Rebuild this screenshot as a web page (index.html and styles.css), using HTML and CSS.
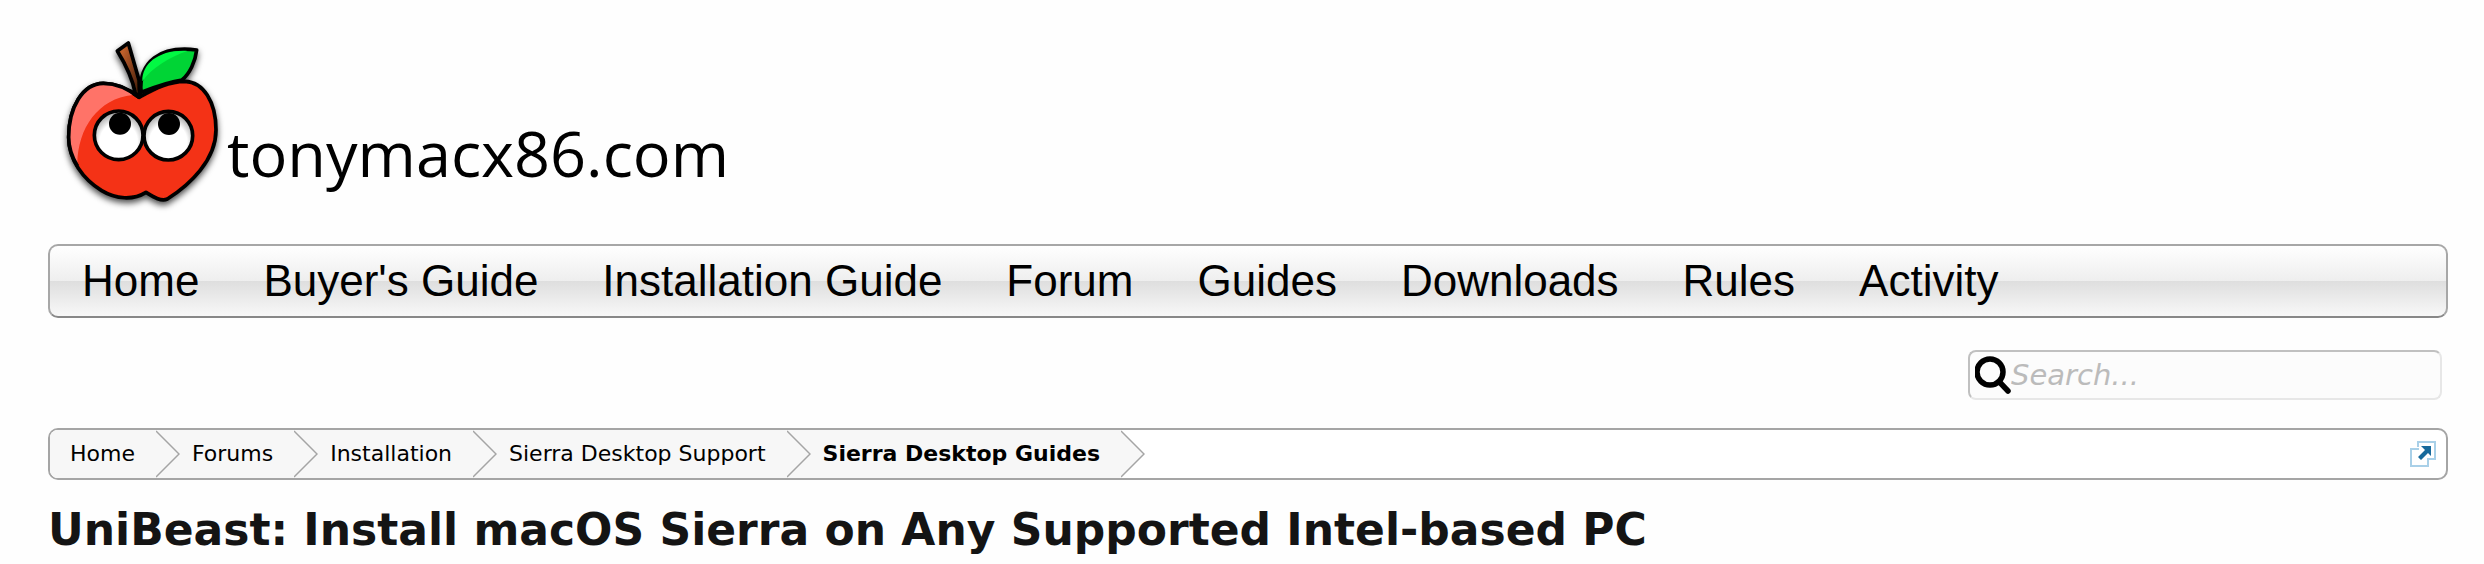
FILE: index.html
```html
<!DOCTYPE html>
<html lang="en">
<head>
    <meta charset="UTF-8">
    <meta name="viewport" content="width=device-width, initial-scale=1.0">
    <title>UniBeast: Install macOS Sierra on Any Supported Intel-based PC</title>
    <link rel="stylesheet" href="styles.css">
</head>
<body>

<header class="header">
    <a class="logo" href="#">
        <svg class="apple" viewBox="60 39 498 570" aria-hidden="true">
            <defs>
                <filter id="shadow" x="-20%" y="-20%" width="140%" height="140%">
                    <feDropShadow dx="0" dy="10" stdDeviation="10" flood-color="#000" flood-opacity="0.7"/>
                </filter>
                <linearGradient id="stem" x1="0" y1="0" x2="1" y2="1">
                    <stop offset="0.2" stop-color="#c0602c"/>
                    <stop offset="0.9" stop-color="#4a200c"/>
                </linearGradient>
                <radialGradient id="eye" cx="0.5" cy="0.62" r="0.62">
                    <stop offset="0.62" stop-color="#fff"/>
                    <stop offset="1" stop-color="#999"/>
                </radialGradient>
                <clipPath id="body">
                    <path d="M297 232C265 206 228 190 190 190C128 191 86 262 86 352C86 420 130 478 185 512C228 538 280 541 318 517C344 533 364 545 382 537C450 494 528 420 528 330C528 245 490 186 435 184C388 184 345 206 297 232Z"/>
                </clipPath>
            </defs>
            <g filter="url(#shadow)" stroke="#000" stroke-width="11" stroke-linejoin="round">
                <path fill="#f43012" d="M297 232C265 206 228 190 190 190C128 191 86 262 86 352C86 420 130 478 185 512C228 538 280 541 318 517C344 533 364 545 382 537C450 494 528 420 528 330C528 245 490 186 435 184C388 184 345 206 297 232Z"/>
                <path fill="url(#stem)" d="M232 93L265 69L297 180L299 230L286 220C275 165 252 125 232 93Z"/>
                <path fill="#02d436" d="M303 217C296 125 360 76 470 90C466 125 449 161 426 180C382 186 347 200 303 217Z"/>
            </g>
            <path clip-path="url(#body)" fill="#ff7368" d="M80 180H220L278 225C175 235 113 325 112 432L80 400Z"/>
            <path fill="#02f843" d="M307 184C306 130 358 88 443 93C390 110 336 143 307 184Z"/>
            <path fill="none" stroke="#000" stroke-width="11" d="M112 438C96 412 86 384 86 352C86 262 128 191 190 190C228 190 265 206 297 232"/>
            <g stroke="#000" stroke-width="11">
                <circle cx="236" cy="346" r="73" fill="url(#eye)"/>
                <circle cx="385" cy="347" r="73" fill="url(#eye)"/>
            </g>
            <circle cx="240" cy="311" r="33"/>
            <circle cx="387" cy="312" r="33"/>
        </svg>
        <span class="logo-text">tonymacx86.com</span>
    </a>
</header>

<nav class="nav">
    <a href="#">Home</a>
    <a href="#">Buyer's Guide</a>
    <a href="#">Installation Guide</a>
    <a href="#">Forum</a>
    <a href="#">Guides</a>
    <a href="#">Downloads</a>
    <a href="#">Rules</a>
    <a href="#">Activity</a>
</nav>

<form class="search">
    <label for="search" aria-label="Search">
        <svg class="search-icon" viewBox="0 0 36 38" aria-hidden="true">
            <circle cx="15" cy="16" r="13" fill="none" stroke="#000" stroke-width="5.5"/>
            <path d="M24 25.5L33 35" stroke="#000" stroke-width="5.5" stroke-linecap="round"/>
        </svg>
    </label>
    <input type="search" id="search" name="search" placeholder="Search...">
</form>

<div class="breadcrumb">
    <ul class="crumbs">
        <li><a href="#">Home</a><svg class="arrow" viewBox="0 0 24 48"><path d="M0 1L23 24L0 47"/></svg></li>
        <li><a href="#">Forums</a><svg class="arrow" viewBox="0 0 24 48"><path d="M0 1L23 24L0 47"/></svg></li>
        <li><a href="#">Installation</a><svg class="arrow" viewBox="0 0 24 48"><path d="M0 1L23 24L0 47"/></svg></li>
        <li><a href="#">Sierra Desktop Support</a><svg class="arrow" viewBox="0 0 24 48"><path d="M0 1L23 24L0 47"/></svg></li>
        <li><a href="#">Sierra Desktop Guides</a><svg class="arrow" viewBox="0 0 24 48"><path d="M0 1L23 24L0 47"/></svg></li>
    </ul>
    <a class="jump" href="#" aria-label="Open quick navigation">
        <svg class="jump-icon" viewBox="0 0 26 26" aria-hidden="true">
            <path fill="#fff" stroke="#a9d0e8" stroke-width="2" d="M8 6V1H25V18H19"/>
            <path fill="#fff" stroke="#a9d0e8" stroke-width="2" d="M9 8H1V25H18V17"/>
            <path fill="#17699b" d="M11 5H21V15L18 12L11 19L8 16L15 9Z"/>
        </svg>
    </a>
</div>

<h1 class="title">UniBeast: Install macOS Sierra on Any Supported Intel-based PC</h1>

</body>
</html>
```
FILE: styles.css
```css
* {
    box-sizing: border-box;
}

body {
    background-color: #fefefe;
    color: #000000;
    font-family: Verdana, "DejaVu Sans", sans-serif;
    font-size: 22px;
    margin: 0;
    padding: 0 36px 0 48px;
}

a {
    color: #000000;
    text-decoration: none;
}

.header {
    display: flex;
    padding: 33px 12px 21px;
}

.logo {
    display: flex;
    align-items: center;
}

.apple {
    display: block;
    width: 166px;
    height: 190px;
}

.logo-text {
    font-family: "Open Sans", sans-serif;
    font-size: 63px;
    font-weight: 500;
    line-height: 80px;
    padding: 50px 0 0 1px;
}

.nav {
    display: flex;
    height: 74px;
    border: 2px solid #a7a7a7;
    border-bottom-color: #888888;
    border-radius: 10px;
    background: linear-gradient(#ffffff, #eeeeee 50%, #dedede 50%, #f8f8f8);
    font-family: Arial, "Liberation Sans", sans-serif;
    font-size: 44px;
    line-height: 70px;
}

.nav a {
    padding: 0 32px;
}

.search {
    display: flex;
    align-items: center;
    width: 474px;
    height: 50px;
    margin: 32px 6px 28px auto;
    padding-left: 5px;
    border: 2px solid;
    border-color: #c0c0c0 #e7e7e7 #e7e7e7 #c0c0c0;
    border-radius: 8px;
    background-color: #fcfcfc;
}

.search-icon {
    display: block;
    width: 36px;
    height: 38px;
}

.search input {
    flex: 1;
    min-width: 0;
    border: none;
    outline: none;
    padding: 0;
    background: none;
    font-family: Verdana, "DejaVu Sans", sans-serif;
    font-size: 29px;
    font-style: italic;
}

.search input::placeholder {
    color: #bbbbbb;
}

.breadcrumb {
    display: flex;
    align-items: center;
    justify-content: space-between;
    border: 2px solid #a5a5a5;
    border-radius: 10px;
    background-color: #ffffff;
    overflow: hidden;
}

.crumbs {
    display: flex;
    list-style: none;
    margin: 0;
    padding: 0;
    line-height: 48px;
}

.crumbs li {
    display: flex;
    background-color: #f7f7f7;
}

.crumbs li:last-child {
    background: none;
    font-weight: bold;
}

.crumbs a {
    padding: 0 21px 0 12px;
    background-color: #f7f7f7;
}

.crumbs li:first-child a {
    padding-left: 20px;
}

.arrow {
    display: block;
    width: 24px;
    height: 48px;
    fill: #f7f7f7;
    stroke: #a5a5a5;
    stroke-width: 1.5;
}

.jump {
    padding-right: 10px;
}

.jump-icon {
    display: block;
    width: 26px;
    height: 26px;
}

.title {
    margin: 20px 0 0;
    color: #141414;
    font-size: 44px;
    line-height: 60px;
}
```
